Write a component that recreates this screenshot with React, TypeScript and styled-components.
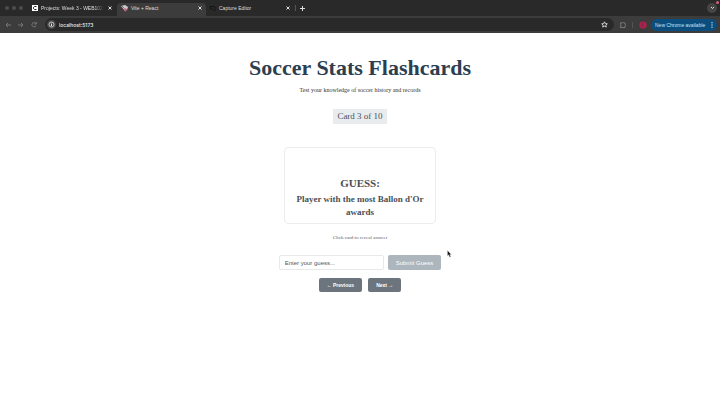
import React, { useState } from "react";
import styled, { createGlobalStyle } from "styled-components";

const GlobalStyle = createGlobalStyle`
  *, *::before, *::after { box-sizing: border-box; }
  body { margin: 0; background: #fff; font-family: "Liberation Serif", "Times New Roman", serif; overflow: hidden; }
  button, input { font-family: "Liberation Sans", Arial, sans-serif; }
  svg { flex: none; }
`;

const Browser = styled.header`
  background: #292929;
  color: #dedede;
  font: 5px/8px "Liberation Sans", Arial, sans-serif;
`;

const TabStrip = styled.div`
  display: flex;
  align-items: stretch;
  height: 16px;
  padding-right: 3px;
`;

const WindowDots = styled.div`
  display: flex;
  align-items: center;
  gap: 3px;
  width: 28px;
  padding-left: 5px;
`;

const Dot = styled.span`
  width: 4px;
  height: 4px;
  border-radius: 50%;
  background: #4d4d4d;
`;

const Tab = styled.div<{ $active?: boolean }>`
  display: flex;
  align-items: center;
  gap: 3px;
  flex: 0 1 89px;
  min-width: 0;
  margin-top: ${(p) => (p.$active ? "3px" : "0")};
  padding: ${(p) => (p.$active ? "0 3px 3px 4px" : "0 4px")};
  border-radius: 4px 4px 0 0;
  background: ${(p) => (p.$active ? "#3c3c3c" : "transparent")};
`;

const TabTitle = styled.span<{ $fade?: boolean }>`
  flex: 1;
  min-width: 0;
  white-space: nowrap;
  mask-image: ${(p) => (p.$fade ? "linear-gradient(90deg, #000 85%, transparent)" : "none")};
`;

const IconButton = styled.button<{ $size?: number; $round?: boolean }>`
  display: flex;
  align-items: center;
  justify-content: center;
  flex: none;
  width: ${(p) => p.$size ?? 6}px;
  height: ${(p) => p.$size ?? 6}px;
  padding: 0;
  border: 0;
  border-radius: 50%;
  background: ${(p) => (p.$round ? "#464646" : "transparent")};
  color: inherit;
`;

const Glyph = styled.svg`
  display: block;
  fill: none;
  stroke: currentColor;
  stroke-width: 1;
`;

const NewTab = styled.div`
  display: flex;
  align-items: center;
  gap: 3px;
`;

const Divider = styled.span`
  width: 1px;
  height: 6px;
  background: #555;
`;

const TabListArea = styled.div`
  display: flex;
  align-items: center;
  margin-left: auto;
  position: relative;
`;

const AlertDot = styled.span`
  position: absolute;
  top: 1px;
  right: -2px;
  width: 3px;
  height: 3px;
  border-radius: 50%;
  background: #d5617a;
`;

const Toolbar = styled.div`
  display: flex;
  align-items: center;
  height: 17px;
  padding: 0 3px 0 5px;
  background: #3c3c3c;
`;

const NavIcons = styled.div`
  display: flex;
  align-items: center;
  gap: 7px;
  width: 40px;
  color: #777;
`;

const AddressBar = styled.div`
  display: flex;
  align-items: center;
  flex: 1;
  gap: 3px;
  height: 13px;
  padding: 0 6px 0 2px;
  border-radius: 7px;
  background: #292929;
`;

const AddressInput = styled.input`
  flex: 1;
  min-width: 0;
  padding: 0;
  border: 0;
  background: transparent;
  color: #ececec;
  font-family: Inter, Arial, sans-serif;
  font-size: 5px;
  font-weight: 500;
  outline: 0;
`;

const ToolIcons = styled.div`
  display: flex;
  align-items: center;
  gap: 6px;
  padding: 0 4px 0 6px;
  color: #888;
`;

const UpdateButton = styled.button`
  display: flex;
  align-items: center;
  justify-content: space-between;
  width: 66px;
  height: 12px;
  padding: 0 4px;
  border: 0;
  border-radius: 6px;
  background: #0b4d7d;
  color: #c5e3f8;
  font-size: 5px;
  white-space: nowrap;
`;

const Page = styled.main`
  display: flex;
  flex-direction: column;
  align-items: center;
  padding-top: 22px;
  text-align: center;
`;

const Title = styled.h1`
  margin: 0;
  color: #2c3e50;
  font-size: 22px;
  line-height: 26px;
`;

const Description = styled.p`
  margin: 4px 0 0;
  color: #333;
  font-size: 6px;
  line-height: 10px;
`;

const Counter = styled.div`
  margin-top: 14px;
  padding: 0 4px;
  border-radius: 1px;
  background: #e9ecef;
  color: #495057;
  font-size: 9px;
  line-height: 15px;
`;

const Card = styled.section`
  width: 152px;
  margin-top: 23px;
  padding: 28px 8px 4px;
  border: 1px solid #ececec;
  border-radius: 4px;
  background: #fff;
  color: #495057;
  cursor: pointer;
`;

const CardHeading = styled.h2`
  margin: 0;
  font-size: 11px;
  line-height: 14px;
`;

const Question = styled.h3`
  margin: 3px 0 0;
  font-size: 9px;
  line-height: 13px;
`;

const Hint = styled.p`
  margin: 9px 0 0;
  color: #5b636a;
  font-size: 5px;
  line-height: 10px;
`;

const GuessForm = styled.form`
  display: flex;
  gap: 4px;
  margin-top: 12px;
`;

const GuessInput = styled.input`
  width: 105px;
  height: 15px;
  padding: 0 5px;
  border: 1px solid #e6e8ea;
  border-radius: 2px;
  color: #495057;
  font-size: 6px;
  outline: 0;
  &::placeholder { color: #555; opacity: 1; }
`;

const SubmitButton = styled.button`
  height: 15px;
  padding: 0 8px;
  border: 0;
  border-radius: 2px;
  background: #adb5bd;
  color: #fff;
  font-size: 6px;
`;

const Navigation = styled.nav`
  display: flex;
  gap: 6px;
  margin-top: 8px;
`;

const NavButton = styled.button`
  height: 14px;
  padding: 0 8px;
  border: 0;
  border-radius: 2px;
  background: #6c757d;
  color: #fff;
  font-size: 5px;
  font-weight: 700;
`;

const Pointer = styled.svg`
  position: absolute;
  left: 447px;
  top: 250px;
`;

const CloseIcon = () => (
  <Glyph width="4" height="4" viewBox="0 0 4 4"><path d="M.5 .5l3 3M3.5 .5l-3 3" /></Glyph>
);

const CloseTab = () => <IconButton aria-label="Close tab"><CloseIcon /></IconButton>;

export default function App() {
  const [guess, setGuess] = useState("");
  return (
    <>
      <GlobalStyle />
      <Browser>
        <TabStrip>
          <WindowDots><Dot /><Dot /><Dot /></WindowDots>
          <Tab>
            <svg width="6" height="6" viewBox="0 0 6 6">
              <rect width="6" height="6" fill="#fff" />
              <path d="M4.5 1.5h-2L1.5 2.3v1.4l1 .8h2" fill="none" stroke="#222" />
            </svg>
            <TabTitle $fade>Projects: Week 3 - WEB102 :</TabTitle>
            <CloseTab />
          </Tab>
          <Tab $active>
            <svg width="7" height="7" viewBox="0 0 7 7">
              <path d="M0 1l4-1 3 2-1 3-2 1z" fill="#ccc" />
              <path d="M3 3l3 1-1 2-1 1z" fill="#cf5577" />
              <path d="M1 1l2 2" stroke="#777" />
            </svg>
            <TabTitle>Vite + React</TabTitle>
            <CloseTab />
          </Tab>
          <Tab>
            <Glyph width="6" height="6" viewBox="0 0 6 6" color="#151515">
              <path d="M0 1.5h5M.5 1v3h2M3 5h3M4 3h2" />
            </Glyph>
            <TabTitle>Capture Editor</TabTitle>
            <CloseTab />
          </Tab>
          <NewTab>
            <Divider />
            <IconButton aria-label="New tab">
              <Glyph width="5" height="5" viewBox="0 0 5 5"><path d="M2.5 0v5M0 2.5h5" /></Glyph>
            </IconButton>
          </NewTab>
          <TabListArea>
            <IconButton $size={10} $round aria-label="Search tabs">
              <Glyph width="5" height="4" viewBox="0 0 5 4"><path d="M1 1l1.5 1.5L4 1" /></Glyph>
            </IconButton>
            <AlertDot />
          </TabListArea>
        </TabStrip>
        <Toolbar>
          <NavIcons>
            <IconButton aria-label="Back">
              <Glyph width="6" height="6" viewBox="0 0 6 6"><path d="M6 3H1M3 1L1 3l2 2" /></Glyph>
            </IconButton>
            <IconButton aria-label="Forward">
              <Glyph width="6" height="6" viewBox="0 0 6 6"><path d="M0 3h5M3 1l2 2-2 2" /></Glyph>
            </IconButton>
            <IconButton aria-label="Reload">
              <Glyph width="6" height="6" viewBox="0 0 6 6"><path d="M5 1.5A2.2 2.2 0 1 0 5.2 3.5M5.3 0v2h-2" /></Glyph>
            </IconButton>
          </NavIcons>
          <AddressBar>
            <IconButton $size={9} $round aria-label="Site information">
              <Glyph width="7" height="7" viewBox="0 0 7 7">
                <circle cx="3.5" cy="3.5" r="2.5" strokeWidth=".8" /><path d="M3.5 3v2M3.5 1.8v.7" />
              </Glyph>
            </IconButton>
            <AddressInput aria-label="Address" defaultValue="localhost:5173" />
            <IconButton $size={7} aria-label="Bookmark">
              <Glyph width="7" height="7" viewBox="0 0 7 7">
                <path d="M3.5 .8l.8 1.8 2 .2-1.5 1.3.5 2-1.8-1-1.8 1 .5-2L.7 2.8l2-.2z" strokeWidth=".9" />
              </Glyph>
            </IconButton>
          </AddressBar>
          <ToolIcons>
            <IconButton aria-label="Extensions">
              <Glyph width="6" height="6" viewBox="0 0 6 6"><path d="M.5 1h1.5a.8.5 0 0 1 1.6 0H5v1.5a.5.8 0 0 1 0 1.6v1.4H.5V4a.5.5 0 0 0 0-1.5z" strokeWidth=".8" /></Glyph>
            </IconButton>
            <Divider />
            <IconButton $size={8} aria-label="Profile">
              <svg width="8" height="8" viewBox="0 0 8 8"><circle cx="4" cy="4" r="3.6" fill="#b51f4d" /><path d="M3 2v4M3 4l2-2M3 4l2 2" stroke="#68304a" fill="none" /></svg>
            </IconButton>
          </ToolIcons>
          <UpdateButton>
            New Chrome available
            <Glyph width="2" height="6" viewBox="0 0 2 6"><path d="M1 0v1.4M1 2.3v1.4M1 4.6V6" /></Glyph>
          </UpdateButton>
        </Toolbar>
      </Browser>
      <Page>
        <Title>Soccer Stats Flashcards</Title>
        <Description>Test your knowledge of soccer history and records</Description>
        <Counter>Card 3 of 10</Counter>
        <Card>
          <CardHeading>GUESS:</CardHeading>
          <Question>Player with the most Ballon d'Or awards</Question>
        </Card>
        <Hint>Click card to reveal answer</Hint>
        <GuessForm onSubmit={(e) => e.preventDefault()}>
          <GuessInput
            aria-label="Your guess"
            placeholder="Enter your guess..."
            value={guess}
            onChange={(e) => setGuess(e.target.value)}
          />
          <SubmitButton type="submit" disabled={!guess}>Submit Guess</SubmitButton>
        </GuessForm>
        <Navigation aria-label="Cards">
          <NavButton>← Previous</NavButton>
          <NavButton>Next →</NavButton>
        </Navigation>
      </Page>
      <Pointer width="5" height="8" viewBox="0 0 5 8" aria-hidden="true">
        <path d="M.5 .5v5.3l1.2-1 1 2.4 1-.4-1-2.2h1.5z" fill="#111" stroke="#ddd" strokeWidth=".3" />
      </Pointer>
    </>
  );
}
